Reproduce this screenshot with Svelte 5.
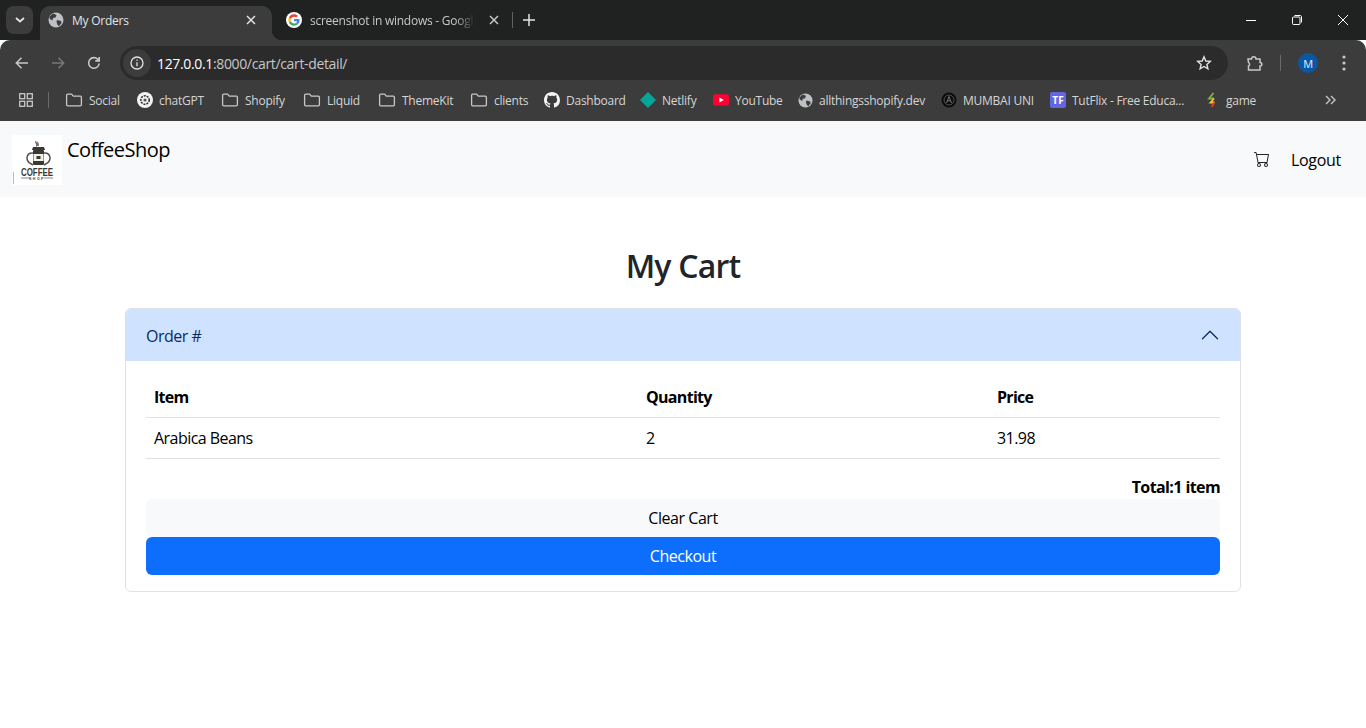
<script>
  const folder = 'folder';
  const bookmarks = [
    { icon: folder, label: 'Social', w: 72 },
    { icon: 'gpt', label: 'chatGPT', w: 84 },
    { icon: folder, label: 'Shopify', w: 82 },
    { icon: folder, label: 'Liquid', w: 75 },
    { icon: folder, label: 'ThemeKit', w: 92 },
    { icon: folder, label: 'clients', w: 74 },
    { icon: 'github', label: 'Dashboard', w: 96 },
    { icon: 'netlify', label: 'Netlify', w: 73 },
    { icon: 'youtube', label: 'YouTube', w: 85 },
    { icon: 'globe', label: 'allthingsshopify.dev', w: 143 },
    { icon: 'mumbai', label: 'MUMBAI UNI', w: 109 },
    { icon: 'tf', label: 'TutFlix - Free Educa...', w: 154 },
    { icon: 'game', label: 'game', w: 60 }
  ];

  const rows = [{ item: 'Arabica Beans', quantity: 2, price: '31.98' }];
</script>

{#snippet globe(size)}
  <svg width={size} height={size} viewBox="0 0 16 16">
    <circle cx="8" cy="8" r="7.500" fill="#bdc1c6" />
    <path d="M5 1.500 8.500 3 7.500 5.500 5 6 4.500 8.500 2 7 1.200 5ZM9 8l4 1 .5 2-2.500 3.200-1.500-1.500L8.500 10Z" fill="#3c3c3c" />
  </svg>
{/snippet}

{#snippet bookmarkIcon(icon)}
  {#if icon === 'folder'}
    <svg width="18" height="16" viewBox="0 0 18 16" fill="none" stroke="#c7c7c7" stroke-width="1.300">
      <path d="M1.600 3.200c0-.6.4-1 1-1h4l1.700 2h7.100c.6 0 1 .4 1 1v7.600c0 .6-.4 1-1 1H2.600c-.6 0-1-.4-1-1Z" />
    </svg>
  {:else if icon === 'gpt'}
    <svg width="16" height="16" viewBox="0 0 16 16">
      <circle cx="8" cy="8" r="8" fill="#f2f2f2" />
      <circle cx="8" cy="8" r="4.200" fill="none" stroke="#333" stroke-width="1.600" stroke-dasharray="2 1" />
      <circle cx="8" cy="8" r="1.600" fill="#555" />
    </svg>
  {:else if icon === 'github'}
    <svg width="16" height="16" viewBox="0 0 16 16">
      <path fill="#f4f4f4" d="M8 0C3.580 0 0 3.580 0 8c0 3.540 2.290 6.530 5.470 7.590.4.070.55-.17.55-.38 0-.19-.01-.82-.01-1.490-2.010.37-2.530-.49-2.690-.94-.09-.23-.48-.94-.82-1.130-.28-.15-.68-.52-.01-.53.63-.01 1.080.58 1.230.82.72 1.210 1.870.87 2.330.66.07-.52.28-.87.51-1.070-1.780-.2-3.640-.89-3.640-3.950 0-.87.31-1.590.82-2.150-.08-.2-.36-1.020.08-2.120 0 0 .67-.21 2.200.82.64-.18 1.320-.27 2-.27s1.360.09 2 .27c1.530-1.040 2.200-.82 2.200-.82.44 1.100.16 1.920.08 2.120.51.56.82 1.270.82 2.150 0 3.070-1.870 3.750-3.650 3.950.29.25.54.73.54 1.480 0 1.070-.01 1.930-.01 2.200 0 .21.15.46.55.38A8.010 8.010 0 0 0 16 8c0-4.420-3.580-8-8-8Z" />
    </svg>
  {:else if icon === 'netlify'}
    <svg width="16" height="16" viewBox="0 0 16 16">
      <path d="M8 0 16 8 8 16 0 8Z" fill="#05a59a" />
    </svg>
  {:else if icon === 'youtube'}
    <svg width="16" height="16" viewBox="0 0 16 16">
      <rect y="2.200" width="16" height="11.400" rx="2.600" fill="#ff0033" />
      <path d="M6.400 5.400 10.800 8 6.400 10.600Z" fill="#fff" />
    </svg>
  {:else if icon === 'globe'}
    {@render globe(15)}
  {:else if icon === 'mumbai'}
    <svg width="16" height="16" viewBox="0 0 16 16">
      <circle cx="8" cy="8" r="7.500" fill="#0b0b0b" />
      <circle cx="8" cy="8" r="5" fill="none" stroke="#555" stroke-width="1" />
      <path d="M5.500 11 8 4.500 10.500 11M6.500 8.800h3" fill="none" stroke="#777" stroke-width="1" />
    </svg>
  {:else if icon === 'tf'}
    <span class="tf">TF</span>
  {:else if icon === 'game'}
    <svg width="16" height="16" viewBox="0 0 16 16" fill="none" stroke-width="1.800">
      <path d="M9.500 1 5 6.500h5" stroke="#7cb342" />
      <path d="M10 6.500 6.500 10.500h4" stroke="#fbc02d" />
      <path d="M10.500 10.500 7.500 15" stroke="#e53935" />
    </svg>
  {/if}
{/snippet}

<div class="browser">
  <div class="tabstrip">
    <button class="tab-search" aria-label="Search tabs">
      <svg width="10" height="6" viewBox="0 0 10 6" fill="none" stroke="#e3e3e3" stroke-width="1.800"><path d="M1 1l4 3.500L9 1" /></svg>
    </button>
    <div class="tab active">
      {@render globe(16)}
      <span class="tab-title">My Orders</span>
      <svg class="x" width="10" height="10" viewBox="0 0 10 10" stroke="#e3e3e3" stroke-width="1.500"><path d="M1 1l8 8M9 1l-8 8" /></svg>
    </div>
    <div class="tab">
      <svg class="g" width="16" height="16" viewBox="0 0 48 48">
        <circle cx="24" cy="24" r="24" fill="#fff" />
        <path fill="#EA4335" d="M24 14c2.700 0 5 1 6.800 2.600l5-5C32.700 8.800 28.700 7 24 7c-6.600 0-12.300 3.800-15.100 9.300l5.800 4.500C16 16.900 19.700 14 24 14Z" />
        <path fill="#4285F4" d="M40.600 24.500c0-1.200-.1-2.300-.3-3.500H24v6.500h9.300c-.4 2.200-1.600 4-3.400 5.200l5.500 4.300c3.200-3 5.200-7.400 5.200-12.500Z" />
        <path fill="#FBBC05" d="M14.700 27.300c-.4-1-.6-2.200-.6-3.300s.2-2.300.6-3.300l-5.800-4.500C7.700 18.500 7 21.200 7 24s.7 5.500 1.900 7.800Z" />
        <path fill="#34A853" d="M24 41c4.600 0 8.400-1.500 11.400-4l-5.500-4.300c-1.600 1-3.600 1.700-5.900 1.700-4.300 0-8-2.900-9.300-6.800l-5.800 4.500C11.700 37.200 17.400 41 24 41Z" />
      </svg>
      <span class="tab-title fade">screenshot in windows - Google</span>
      <svg class="x" width="10" height="10" viewBox="0 0 10 10" stroke="#c7c7c7" stroke-width="1.500"><path d="M1 1l8 8M9 1l-8 8" /></svg>
    </div>
    <span class="tab-sep"></span>
    <svg class="plus" width="12" height="12" viewBox="0 0 12 12" stroke="#e3e3e3" stroke-width="1.500"><path d="M6 0v12M0 6h12" /></svg>
    <div class="window-controls">
      <svg width="12" height="12" viewBox="0 0 12 12" stroke="#fff" stroke-width="1"><path d="M1 6.500h10" /></svg>
      <svg width="12" height="12" viewBox="0 0 12 12" fill="none" stroke="#fff" stroke-width="1"><rect x="1.500" y="3" width="7.500" height="7.500" rx="1" /><path d="M3.500 1.500H9c1 0 1.500.5 1.500 1.500v5.500" /></svg>
      <svg width="12" height="12" viewBox="0 0 12 12" stroke="#fff" stroke-width="1"><path d="M1 1l10 10M11 1 1 11" /></svg>
    </div>
  </div>

  <div class="toolbar">
    <svg class="nav" width="16" height="16" viewBox="0 0 16 16" fill="none" stroke="#c7c7c7" stroke-width="1.500"><path d="M14 8H2.500M7.500 2.800 2.300 8l5.200 5.200" /></svg>
    <svg class="nav" width="16" height="16" viewBox="0 0 16 16" fill="none" stroke="#777" stroke-width="1.500"><path d="M2 8h11.500M8.500 2.800 13.700 8l-5.200 5.200" /></svg>
    <svg class="nav" width="16" height="16" viewBox="0 0 16 16" fill="none" stroke="#c7c7c7" stroke-width="1.600"><path d="M13.200 8.500a5.300 5.300 0 1 1-1.500-4.300L13.200 5.700M13.200 2v3.900H9.300" /></svg>
    <div class="omnibox">
      <span class="info">
        <svg width="16" height="16" viewBox="0 0 16 16" fill="none" stroke="#e3e3e3" stroke-width="1.300"><circle cx="8" cy="8" r="6" /><path d="M8 7.300v4M8 4.500v1.300" /></svg>
      </span>
      <span class="url"><b>127.0.0.1</b>:8000/cart/cart-detail/</span>
      <svg class="star" width="16" height="16" viewBox="0 0 16 16" fill="none" stroke="#e3e3e3" stroke-width="1.400"><path d="M8 1.800 9.800 6l4.500.4-3.400 3 1 4.400L8 11.500l-3.900 2.300 1-4.400-3.400-3L6.200 6Z" /></svg>
    </div>
    <svg class="ext" width="18" height="18" viewBox="0 0 18 18" fill="none" stroke="#c7c7c7" stroke-width="1.500"><path d="M2 5h3.500c0-3 4.500-3 4.500 0H14v3.500c2.500 0 2.500 3.500 0 3.500v4H2.500v-4c1.500-.5 1.500-3 0-3.500Z" /></svg>
    <span class="bar-sep"></span>
    <span class="avatar">M</span>
    <svg class="dots" width="4" height="16" viewBox="0 0 4 16" fill="#c7c7c7"><circle cx="2" cy="2" r="1.600" /><circle cx="2" cy="8" r="1.600" /><circle cx="2" cy="14" r="1.600" /></svg>
  </div>

  <div class="bookmarks">
    <svg class="apps" width="14" height="14" viewBox="0 0 14 14" fill="none" stroke="#c7c7c7" stroke-width="1.300"><rect x=".7" y=".7" width="5" height="5" /><rect x="8.300" y=".7" width="5" height="5" /><rect x=".7" y="8.300" width="5" height="5" /><rect x="8.300" y="8.300" width="5" height="5" /></svg>
    <span class="bm-sep"></span>
    {#each bookmarks as b}
      <div class="bookmark" style="width: {b.w}px">
        {@render bookmarkIcon(b.icon)}
        <span>{b.label}</span>
      </div>
    {/each}
    <svg class="more" width="11" height="10" viewBox="0 0 11 10" fill="none" stroke="#c7c7c7" stroke-width="1.400"><path d="M1 1l4 4-4 4M6 1l4 4-4 4" /></svg>
  </div>
</div>

<nav class="navbar">
  <div class="brand">
    <svg class="logo" width="50" height="50" viewBox="0 0 50 50">
      <rect width="50" height="50" fill="#fff" />
      <path d="M1.500 37v12" stroke="#bbb" stroke-width="1" />
      <path d="M24 6c-1.500 2 2.500 3 .5 5.500M26 7c-1 1.500 1 2 0 4" fill="none" stroke="#5a5550" stroke-width="1.200" />
      <path d="M20 15l1-3h11l1 3Z" fill="#3b3733" />
      <rect x="21" y="15" width="11" height="15" rx="1" fill="#3b3733" />
      <rect x="21.500" y="19" width="10" height="7" fill="#f3efe9" />
      <rect x="24.500" y="21" width="4" height="3" fill="#3b3733" />
      <path d="M21 18c-6-1-8 6-3.500 10l3.500 2M32 18c6-1 8 6 3.500 10l-3.500 2" fill="none" stroke="#55504b" stroke-width="1.500" />
      <text x="9" y="40.500" textLength="32" lengthAdjust="spacingAndGlyphs" class="logo-big">COFFEE</text>
      <path d="M9 43h9M32 43h9" stroke="#55504b" stroke-width=".7" />
      <text x="25" y="44.500" text-anchor="middle" class="logo-small">SHOP</text>
    </svg>
    <span class="brand-name">CoffeeShop</span>
  </div>
  <div class="nav-links">
    <svg class="cart" width="16" height="16" viewBox="0 0 16 16" fill="#212529"><path d="M0 1.500A.5.5 0 0 1 .5 1H2a.5.5 0 0 1 .485.379L2.890 3H14.500a.5.5 0 0 1 .491.592l-1.500 8A.5.5 0 0 1 13 12H4a.5.5 0 0 1-.491-.408L2.010 3.607 1.610 2H.5a.5.5 0 0 1-.5-.5zM3.102 4l1.313 7h8.170l1.313-7H3.102zM5 12a2 2 0 1 0 0 4 2 2 0 0 0 0-4zm7 0a2 2 0 1 0 0 4 2 2 0 0 0 0-4zm-7 1a1 1 0 1 1 0 2 1 1 0 0 1 0-2zm7 0a1 1 0 1 1 0 2 1 1 0 0 1 0-2z" /></svg>
    <span class="logout">Logout</span>
  </div>
</nav>

<main class="page">
  <h1>My Cart</h1>
  <section class="accordion">
    <header class="accordion-head">
      <span class="order">Order #</span>
      <svg width="20" height="20" viewBox="0 0 16 16" fill="#052c65"><path fill-rule="evenodd" d="M14.354 11.354a.5.5 0 0 1-.708 0L8 5.707l-5.646 5.647a.5.5 0 0 1-.708-.708l6-6a.5.5 0 0 1 .708 0l6 6a.5.5 0 0 1 0 .708z" /></svg>
    </header>
    <div class="accordion-body">
      <table>
        <thead>
          <tr><th class="c1">Item</th><th class="c2">Quantity</th><th>Price</th></tr>
        </thead>
        <tbody>
          {#each rows as r}
            <tr><td>{r.item}</td><td>{r.quantity}</td><td>{r.price}</td></tr>
          {/each}
        </tbody>
      </table>
      <div class="total">Total:1 item</div>
      <button class="btn clear">Clear Cart</button>
      <button class="btn checkout">Checkout</button>
    </div>
  </section>
</main>

<style>
  :global(body) {
    margin: 0;
    background: #fff;
    font-family: "Open Sans", "Noto Sans", "Liberation Sans", sans-serif;
    color: #212529;
    overflow: hidden;
  }

  svg {
    display: block;
    flex: none;
  }

  .browser {
    font-size: 12px;
    letter-spacing: -0.25px;
    color: #e3e3e3;
  }

  .tabstrip {
    height: 40px;
    background: #202221;
    display: flex;
    align-items: center;
    box-sizing: border-box;
    padding: 6px 0 0 6px;
  }

  .tab-search {
    width: 27px;
    height: 28px;
    margin-top: -6px;
    border: 0;
    border-radius: 8px;
    background: #3c3c3c;
    display: flex;
    align-items: center;
    justify-content: center;
    padding: 0;
  }

  .tab {
    height: 34px;
    box-sizing: border-box;
    display: flex;
    align-items: center;
    gap: 8px;
    flex: none;
    position: relative;
  }

  .tab.active {
    width: 232px;
    background: #3c3c3c;
    border-radius: 10px 10px 0 0;
    margin-left: 7px;
    padding: 0 16px 6px 8px;
    align-self: flex-end;
  }

  .tab.active::after {
    content: "";
    position: absolute;
    right: -10px;
    bottom: 0;
    width: 10px;
    height: 10px;
    background: radial-gradient(circle at 100% 0, transparent 10px, #3c3c3c 10.500px);
  }

  .tab:not(.active) {
    width: 235px;
    margin-left: 5px;
    height: 40px;
    margin-top: -6px;
    padding: 0 13px 0 9px;
  }

  .tab-title {
    flex: 1;
    white-space: nowrap;
    overflow: hidden;
  }

  .fade {
    color: #c7c7c7;
    -webkit-mask-image: linear-gradient(to right, #000 88%, transparent);
    mask-image: linear-gradient(to right, #000 88%, transparent);
  }

  .x {
    margin-left: 6px;
  }

  .tab-sep {
    width: 1px;
    height: 16px;
    margin: -6px 0 0 0;
    background: #5f6368;
  }

  .plus {
    margin: -6px 0 0 10px;
  }

  .window-controls {
    margin-left: auto;
    margin-top: -6px;
    display: flex;
    gap: 34px;
    padding-right: 17px;
  }

  .toolbar {
    height: 40px;
    background: #3c3c3c;
    border-radius: 10px 10px 0 0;
    display: flex;
    box-sizing: border-box;
    padding: 6px 0 0 14px;
    align-items: center;
  }

  .nav {
    margin-right: 20px;
  }

  .nav:nth-child(3) {
    margin-right: 18px;
  }

  .omnibox {
    width: 1108px;
    height: 34px;
    box-sizing: border-box;
    border-radius: 17px;
    background: #2b2b2b;
    display: flex;
    align-items: center;
    padding: 0 16px 0 3px;
  }

  .info {
    width: 28px;
    height: 28px;
    border-radius: 50%;
    background: #3c3c3c;
    display: flex;
    align-items: center;
    justify-content: center;
    margin-right: 6px;
  }

  .url {
    font-size: 14px;
    letter-spacing: -0.35px;
    color: #c7c7c7;
    flex: 1;
  }

  .url b {
    font-weight: 400;
    color: #fff;
  }

  .ext {
    margin-left: 18px;
  }

  .bar-sep {
    width: 1px;
    height: 16px;
    background: #6a6a6a;
    margin-left: 16px;
  }

  .avatar {
    width: 20px;
    height: 20px;
    border-radius: 50%;
    background: #0b57a4;
    color: #e8f0fe;
    font-size: 11px;
    display: flex;
    align-items: center;
    justify-content: center;
    margin-left: 17px;
  }

  .dots {
    margin-left: 24px;
  }

  .bookmarks {
    height: 41px;
    background: #3c3c3c;
    display: flex;
    align-items: center;
    box-sizing: border-box;
    padding: 0 0 1px 19px;
  }

  .bm-sep {
    width: 1px;
    height: 16px;
    background: #6a6a6a;
    margin: 0 16px 0 15px;
  }

  .bookmark {
    display: flex;
    align-items: center;
    gap: 6px;
    flex: none;
    white-space: nowrap;
    color: #d5d5d5;
  }

  .tf {
    width: 16px;
    height: 16px;
    border-radius: 2px;
    background: #6366e1;
    color: #fff;
    font-size: 10px;
    font-weight: 700;
    letter-spacing: 0;
    display: flex;
    align-items: center;
    justify-content: center;
  }

  .more {
    margin-left: 61px;
  }

  .navbar {
    height: 76px;
    background: #f8f9fa;
    display: flex;
    justify-content: space-between;
    box-sizing: border-box;
    padding: 14px 25px 0 12px;
  }

  .brand {
    display: flex;
    gap: 5px;
    align-items: flex-start;
  }

  .brand-name {
    font-size: 20px;
    letter-spacing: -0.5px;
    line-height: 30px;
    color: #000;
  }

  .logo-big {
    font-family: "Liberation Sans", sans-serif;
    font-size: 11px;
    font-weight: 700;
    fill: #3b3733;
  }

  .logo-small {
    font-family: "Liberation Sans", sans-serif;
    font-size: 3.500px;
    font-weight: 700;
    fill: #3b3733;
    letter-spacing: 1.500px;
  }

  .nav-links {
    display: flex;
    align-items: center;
    gap: 21px;
    height: 50px;
  }

  .cart {
    margin-top: -2px;
  }

  .logout {
    font-size: 16px;
    letter-spacing: -0.3px;
    color: #000;
  }

  .page {
    width: 1116px;
    margin: 0 auto;
  }

  h1 {
    margin: 0;
    padding-top: 47px;
    height: 64px;
    font-size: 32px;
    font-weight: 600;
    line-height: 44px;
    letter-spacing: -0.8px;
    text-align: center;
  }

  .accordion {
    box-sizing: border-box;
    height: 284px;
    border: 1px solid #dee2e6;
    border-radius: 6px;
    overflow: hidden;
  }

  .accordion-head {
    height: 52px;
    background: #cfe2ff;
    color: #052c65;
    font-size: 16px;
    letter-spacing: -0.5px;
    display: flex;
    align-items: center;
    justify-content: space-between;
    padding: 0 20px;
  }

  .order {
    padding-top: 2px;
  }

  .accordion-body {
    padding: 16px 20px;
  }

  table {
    width: 100%;
    border-collapse: collapse;
    font-size: 16px;
    letter-spacing: -0.55px;
    color: #000;
  }

  th, td {
    text-align: left;
    padding: 8px;
    height: 24px;
    border-bottom: 1px solid #dee2e6;
    line-height: 24px;
  }

  th {
    font-weight: 700;
    letter-spacing: -0.7px;
  }

  .c1 {
    width: 476px;
  }

  .c2 {
    width: 335px;
  }

  .total {
    margin-top: 16px;
    height: 24px;
    line-height: 24px;
    font-size: 16px;
    font-weight: 700;
    letter-spacing: -0.6px;
    text-align: right;
    color: #000;
  }

  .btn {
    display: block;
    width: 100%;
    height: 38px;
    border: 0;
    border-radius: 6px;
    font: inherit;
    font-size: 16px;
    letter-spacing: -0.45px;
    text-align: center;
    padding: 0;
  }

  .clear {
    background: #f8f9fa;
    color: #000;
  }

  .checkout {
    background: #0d6efd;
    color: #fff;
  }
</style>
